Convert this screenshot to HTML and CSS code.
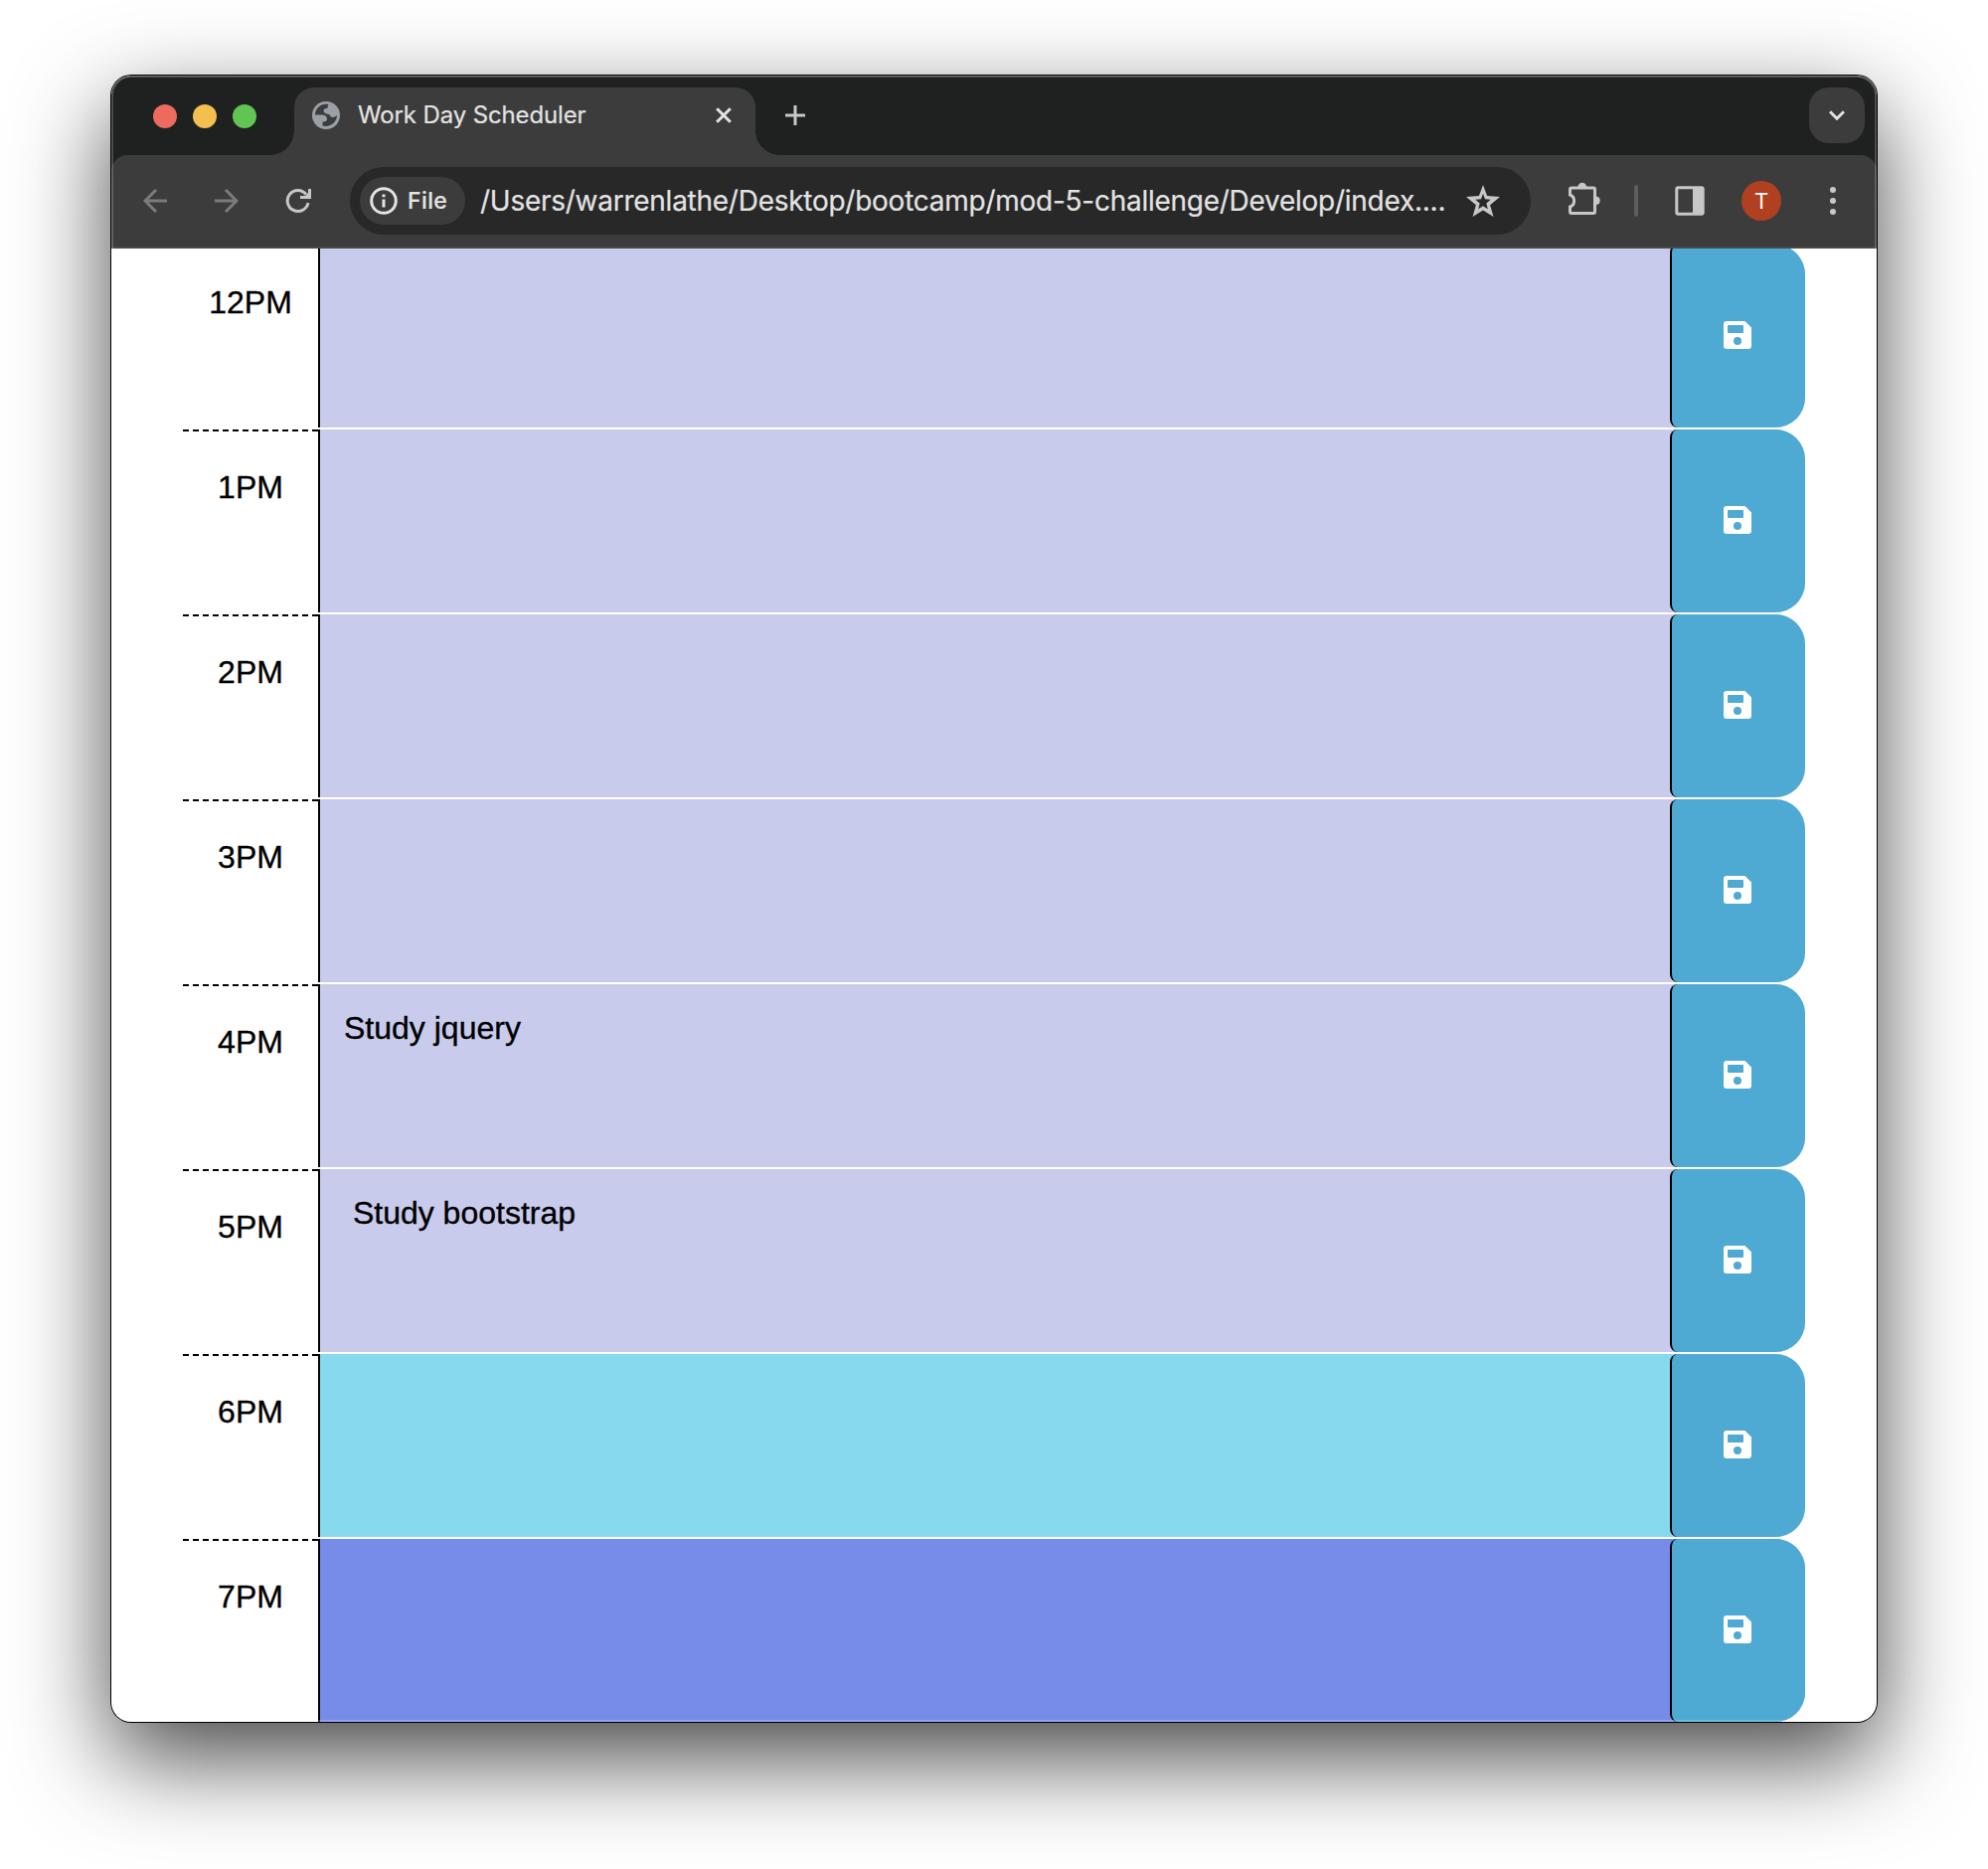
FILE: index.html
```html
<!DOCTYPE html>
<html lang="en">
<head>
<meta charset="utf-8">
<title>Work Day Scheduler</title>
<link rel="stylesheet" href="styles.css">
</head>
<body>
<svg class="defs" aria-hidden="true">
  <symbol id="save" viewBox="0 0 28 28">
    <path fill-rule="evenodd" d="M3 0H21.5L28 6.5V25a3 3 0 0 1-3 3H3a3 3 0 0 1-3-3V3a3 3 0 0 1 3-3ZM5 4a1 1 0 0 0-1 1v6a1 1 0 0 0 1 1H19a1 1 0 0 0 1-1V5a1 1 0 0 0-1-1ZM14 16a4 4 0 1 0 0 8 4 4 0 0 0 0-8Z"/>
  </symbol>
</svg>
<div class="window">
  <header class="tabstrip">
    <div class="lights"><i class="light red"></i><i class="light yellow"></i><i class="light green"></i></div>
    <div class="tab">
      <svg class="globe" viewBox="0 0 28 28"><circle cx="14" cy="14" r="14" fill="#9aa0a6"/><path fill="#3c3c3c" d="M16.500 3C9 1.500 3 7 3 13.500H10.500C13 13.500 15 15 15 18C15 20 13 20.500 10.500 20.500V24.500C18 26.500 25 21 25 14C22 17 18 16.500 17.500 13C15 13 12 12 11.500 9.500C11.500 7.500 13 7 15.500 7C15.500 5 16 4 16.500 3Z"/></svg>
      <span class="tab-title">Work Day Scheduler</span>
      <svg class="close" viewBox="0 0 16 16"><path d="M1.200 1.200 14.800 14.800M14.800 1.200 1.200 14.800"/></svg>
    </div>
    <svg class="plus" viewBox="0 0 20 20"><path d="M10 0V20M0 10H20"/></svg>
    <div class="tab-search"><svg viewBox="0 0 16 10"><path d="M1 1.200 8 8.200 15 1.200"/></svg></div>
  </header>
  <nav class="toolbar">
    <svg class="arrow" viewBox="0 0 24 24"><path d="M24 12H2M13 1 2 12 13 23"/></svg>
    <svg class="arrow forward" viewBox="0 0 24 24"><path d="M0 12H22M11 1 22 12 11 23"/></svg>
    <svg class="reload" viewBox="0 0 26 26"><path class="line" d="M23 15A10.500 10.500 0 1 1 21 6.500"/><path class="fill" d="M26 1V11H15V8H20L23 5V1Z"/></svg>
    <div class="omnibox">
      <div class="chip"><svg class="info" viewBox="0 0 28 28"><circle cx="14" cy="14" r="12.300"/><path d="M14 12.500V20.500M14 7.500V10.300"/></svg><span>File</span></div>
      <span class="url">/Users/warrenlathe/Desktop/bootcamp/mod-5-challenge/Develop/index....</span>
      <svg class="star" viewBox="0 0 34 32"><path fill-rule="evenodd" d="M17 0 21.100 11.100 34 12.100 24.100 20.200 27.500 32 17 25.500 6.500 32 9.900 20.200 0 12.100 12.900 11.100ZM17 8.800 15 14.300 9.300 14.700 13.700 18.400 12.200 24.300 17 21.300 21.800 24.300 20.300 18.400 24.700 14.700 19 14.300Z"/></svg>
    </div>
    <svg class="puzzle" viewBox="0 0 34 34"><path class="line" d="M4 6H26a1.500 1.500 0 0 1 1.500 1.500V30a1.500 1.500 0 0 1-1.500 1.500H4A1.500 1.500 0 0 1 2.500 30V25C8 23 8 15 2.500 13V7.500A1.500 1.500 0 0 1 4 6Z"/><path class="fill" d="M10.500 5a4.300 4.300 0 0 1 8.600 0ZM29 14.500a4.300 4.300 0 0 1 0 8.500Z"/></svg>
    <i class="divider"></i>
    <svg class="panel" viewBox="0 0 30 30"><rect x="1.800" y="1.800" width="26.400" height="26.400" rx="1.500"/><path d="M18 1H27a2 2 0 0 1 2 2V27a2 2 0 0 1-2 2H18Z"/></svg>
    <span class="avatar">T</span>
    <svg class="dots" viewBox="0 0 6 28"><circle cx="3" cy="3" r="3"/><circle cx="3" cy="14" r="3"/><circle cx="3" cy="25" r="3"/></svg>
  </nav>
  <main class="page">
    <div class="schedule">
      <div class="row past"><div class="hour">12PM</div><div class="note"></div><button class="save" aria-label="save"><svg><use href="#save"/></svg></button></div>
      <div class="row past"><div class="hour">1PM</div><div class="note"></div><button class="save" aria-label="save"><svg><use href="#save"/></svg></button></div>
      <div class="row past"><div class="hour">2PM</div><div class="note"></div><button class="save" aria-label="save"><svg><use href="#save"/></svg></button></div>
      <div class="row past"><div class="hour">3PM</div><div class="note"></div><button class="save" aria-label="save"><svg><use href="#save"/></svg></button></div>
      <div class="row past"><div class="hour">4PM</div><div class="note">Study jquery</div><button class="save" aria-label="save"><svg><use href="#save"/></svg></button></div>
      <div class="row past"><div class="hour">5PM</div><div class="note"> Study bootstrap</div><button class="save" aria-label="save"><svg><use href="#save"/></svg></button></div>
      <div class="row present"><div class="hour">6PM</div><div class="note"></div><button class="save" aria-label="save"><svg><use href="#save"/></svg></button></div>
      <div class="row future"><div class="hour">7PM</div><div class="note"></div><button class="save" aria-label="save"><svg><use href="#save"/></svg></button></div>
    </div>
  </main>
</div>
</body>
</html>
```
FILE: styles.css
```css
* { box-sizing: border-box; }
html, body { margin: 0; height: 1880px; overflow: hidden; background: #fff; }
body { padding: 76px 112px 0; }
svg { display: block; flex: none; }
.defs { display: none; }

.window {
  position: relative;
  width: 1776px;
  height: 1656px;
  border-radius: 20px;
  background: #fff;
  box-shadow: 0 0 0 1px #000, 0 36px 96px rgba(0, 0, 0, .73);
}
/* light rim along the inside of the window frame */
.window::after {
  content: "";
  position: absolute;
  inset: 0;
  border-radius: 20px;
  box-shadow: inset 0 0 0 2px rgba(255, 255, 255, .2), inset 0 1px 0 rgba(255, 255, 255, .2);
  pointer-events: none;
}

.tabstrip {
  display: flex;
  align-items: flex-start;
  height: 96px;
  margin-bottom: -16px;
  padding: 12px 12px 0 42px;
  border-radius: 20px 20px 0 0;
  background: #1f2120;
  font-family: Inter, sans-serif;
}
.lights { display: flex; gap: 16px; margin-top: 17px; }
.light { width: 24px; height: 24px; border-radius: 50%; }
.red { background: #ed6a5e; }
.yellow { background: #f5bf4f; }
.green { background: #61c554; }
.tab {
  position: relative;
  display: flex;
  align-items: center;
  width: 464px;
  height: 68px;
  margin-left: 38px;
  padding: 0 24px 12px 18px;
  border-radius: 20px 20px 0 0;
  background: #3c3c3c;
  color: #e3e3e3;
}
.tab::before, .tab::after {
  content: "";
  position: absolute;
  bottom: 0;
  width: 24px;
  height: 24px;
}
.tab::before { left: -24px; background: radial-gradient(circle at 0 0, transparent 23.5px, #3c3c3c 24px); }
.tab::after { right: -24px; background: radial-gradient(circle at 100% 0, transparent 23.5px, #3c3c3c 24px); }
.globe { width: 28px; height: 28px; }
.tab-title { margin: -1px 0 0 18px; font-size: 24px; letter-spacing: -.13px; white-space: nowrap; -webkit-text-stroke: .2px; }
.close { width: 16px; height: 16px; margin-left: auto; stroke: #e3e3e3; stroke-width: 3; }
.plus { width: 20px; height: 20px; margin: 18px 0 0 30px; stroke: #c7c7c7; stroke-width: 3; }
.tab-search {
  display: flex;
  align-items: center;
  justify-content: center;
  width: 56px;
  height: 56px;
  margin-left: auto;
  border-radius: 20px;
  background: #3c3c3c;
}
.tab-search svg { width: 16px; height: 10px; fill: none; stroke: #e3e3e3; stroke-width: 3; }

.toolbar {
  position: relative;
  display: flex;
  align-items: center;
  height: 94px;
  padding: 0 41px 0 32px;
  border-bottom: 2px solid #4a4a48;
  border-radius: 16px 16px 0 0;
  background: #3c3c3c;
  font-family: Inter, sans-serif;
}
.arrow { width: 24px; height: 24px; fill: none; stroke: #7b7b7b; stroke-width: 3; }
.forward { margin-left: 48px; }
.reload { width: 26px; height: 26px; margin-left: 47px; }
.line { fill: none; stroke: #c7c7c7; stroke-width: 3; }
.fill { fill: #c7c7c7; }
.omnibox {
  display: flex;
  align-items: center;
  width: 1188px;
  height: 68px;
  margin-left: 39px;
  padding: 0 31px 0 10px;
  border-radius: 34px;
  background: #282828;
  color: #e3e3e3;
}
.chip {
  display: flex;
  align-items: center;
  width: 106px;
  height: 48px;
  padding-left: 10px;
  border-radius: 24px;
  background: #3c3c3c;
  font-size: 23px;
  font-weight: 500;
  letter-spacing: .4px;
}
.chip span { margin-left: 10px; -webkit-text-stroke: .2px; }
.info { width: 28px; height: 28px; fill: none; stroke: #e3e3e3; stroke-width: 3; }
.url { margin-left: 15px; font-size: 28px; letter-spacing: -.26px; white-space: nowrap; -webkit-text-stroke: .2px; }
.star { width: 34px; height: 32px; margin-left: auto; fill: #c7c7c7; }
.puzzle { width: 34px; height: 34px; margin: 0 0 4px 37px; }
.divider { width: 4px; height: 32px; margin-left: 33px; border-radius: 2px; background: #5e5e5e; }
.panel { width: 30px; height: 30px; margin-left: 37px; fill: #c7c7c7; }
.panel rect { fill: none; stroke: #c7c7c7; stroke-width: 3; }
.avatar {
  width: 40px;
  height: 40px;
  margin-left: 37px;
  border-radius: 50%;
  background: #b0401f;
  color: #fff;
  font: 22px/41px Roboto, sans-serif;
  text-align: center;
}
.dots { width: 6px; height: 28px; margin-left: auto; fill: #c7c7c7; }

.page {
  height: 1482px;
  overflow: hidden;
  border-radius: 0 0 20px 20px;
  font: 32px/48px "Liberation Sans", Arial, sans-serif;
  color: #000;
  -webkit-text-stroke: .35px;
}
/* the list is scrolled a little way under the toolbar */
.schedule { margin: -4px 72px 0; }
.row {
  display: grid;
  grid-template-columns: 136px 1fr 136px;
  height: 184px;
  margin-bottom: 2px;
  border-radius: 0 30px 30px 0;
}
.past { background: #c9cbec; }
.present { background: #87d9ed; }
.future { background: #778ce8; }
.hour {
  padding-top: 32px;
  border-top: 2px dashed #000;
  background: #fff;
  text-align: center;
}
.note { padding: 20px 24px; border-left: 2px solid #000; white-space: pre; }
.save {
  display: flex;
  align-items: center;
  justify-content: center;
  padding: 0 2px 2px 0;
  border: 0 solid #000;
  border-left-width: 2px;
  border-radius: 8px 30px 30px 8px;
  background: #4eaad2;
}
.save svg { width: 28px; height: 28px; fill: #fff; }
```
